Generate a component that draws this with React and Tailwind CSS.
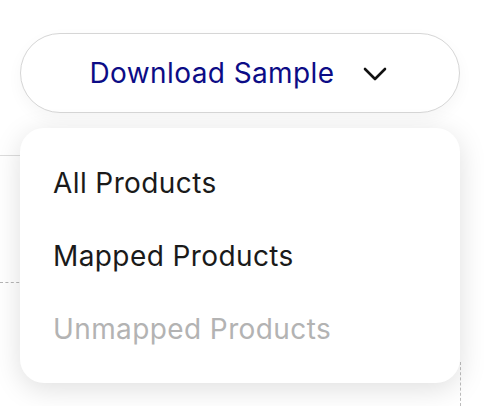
export default function App() {
  const items = [
    { label: 'All Products', disabled: false },
    { label: 'Mapped Products', disabled: false },
    { label: 'Unmapped Products', disabled: true },
  ]

  return (
    <div className="relative h-[406px] w-[484px] overflow-hidden bg-white font-['Inter','Liberation_Sans',sans-serif]">
      {/* underlying chart guides */}
      <div className="absolute left-0 top-[155px] h-px w-[30px] bg-[#dcdcdc]" />
      <div className="absolute left-0 top-[282px] w-[30px] border-t border-dashed border-[#b5b5b5]" />
      <div className="absolute left-[460px] top-[362px] h-[44px] border-l border-dashed border-[#bdbdbd]" />

      <div className="relative ml-5 flex w-[440px] flex-col gap-[15px] pt-[33px]">
        <button className="flex h-[80px] w-full items-center justify-center gap-[28px] rounded-full border border-[#d6d6d6] bg-white pr-[4px] shadow-[0_6px_16px_rgba(0,0,0,0.04)]">
          <span className="text-[28px] leading-none tracking-[0.4px] text-[#0c0c86]">Download Sample</span>
          <svg width="24" height="14" viewBox="0 0 24 14" fill="none" className="mt-[1px]">
            <path d="M2 2l10 10L22 2" stroke="#111" strokeWidth="2.6" strokeLinecap="round" strokeLinejoin="round" />
          </svg>
        </button>

        <div className="rounded-[24px] bg-white py-[18px] shadow-[0_6px_28px_rgba(0,0,0,0.13)]">
          {items.map((it) => (
            <div
              key={it.label}
              className={`flex h-[73px] items-center pl-[33px] text-[28px] tracking-[0.4px] ${it.disabled ? 'text-[#b3b3b3]' : 'text-[#1a1a1a]'}`}
            >
              {it.label}
            </div>
          ))}
        </div>
      </div>
    </div>
  )
}
